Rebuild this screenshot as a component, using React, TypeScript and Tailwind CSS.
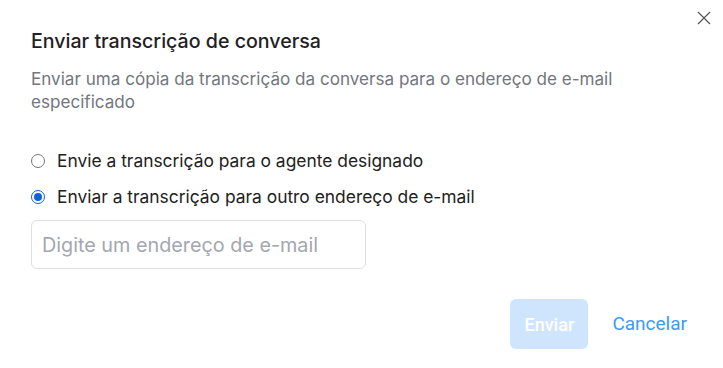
import { useState } from 'react'

export default function App() {
  const [mode, setMode] = useState<'agent' | 'other'>('other')
  const [email, setEmail] = useState('')

  return (
    <div className="relative w-[723px] h-[368px] bg-white font-['Inter',sans-serif] text-[#222]">
      {/* fechar */}
      <button className="absolute right-[12px] top-[11px] w-[14px] h-[14px] text-[#555]">
        <svg viewBox="0 0 14 14" width="14" height="14" fill="none" stroke="currentColor" strokeWidth="1.2">
          <path d="M1 1L13 13M13 1L1 13" />
        </svg>
      </button>

      <div className="pl-[31px] pr-[36px] pt-[29px]">
        <h2 className="text-[19.6px] leading-[24px] font-medium text-[#1f2125]">
          Enviar transcrição de conversa
        </h2>
        <p className="mt-[14px] w-[620px] text-[17.1px] leading-[23px] text-[#72767d]">
          Enviar uma cópia da transcrição da conversa para o endereço de e-mail especificado
        </p>

        <div className="mt-[36px] flex flex-col gap-[13px]">
          <label className="flex items-center gap-[12px] cursor-pointer" onClick={() => setMode('agent')}>
            <span
              className={`w-[14px] h-[14px] rounded-full border flex items-center justify-center ${
                mode === 'agent' ? 'border-[#0b63d6]' : 'border-[#767676]'
              }`}
            >
              {mode === 'agent' && <span className="w-[8px] h-[8px] rounded-full bg-[#0b63d6]" />}
            </span>
            <span className="text-[17.4px] leading-[23px] text-[#222]">
              Envie a transcrição para o agente designado
            </span>
          </label>
          <label className="flex items-center gap-[12px] cursor-pointer" onClick={() => setMode('other')}>
            <span
              className={`w-[14px] h-[14px] rounded-full border flex items-center justify-center ${
                mode === 'other' ? 'border-[#0b63d6]' : 'border-[#767676]'
              }`}
            >
              {mode === 'other' && <span className="w-[8px] h-[8px] rounded-full bg-[#0b63d6]" />}
            </span>
            <span className="text-[17.4px] leading-[23px] text-[#222]">
              Enviar a transcrição para outro endereço de e-mail
            </span>
          </label>
        </div>

        <input
          value={email}
          onChange={(e) => setEmail(e.target.value)}
          placeholder="Digite um endereço de e-mail"
          className="mt-[12px] w-[335px] h-[49px] px-[10px] rounded-[6px] border border-[#dcdfe4] text-[19.8px] placeholder:text-[#a2a7b0] outline-none"
        />

        <div className="mt-[30px] flex justify-end items-center gap-[24px]">
          <button
            disabled={!email}
            className="h-[50px] w-[78px] rounded-[6px] bg-[#cfe5fd] text-white text-[18px] font-medium font-['Roboto',sans-serif]"
          >
            Enviar
          </button>
          <button className="text-[19px] text-[#3b9bf5] font-['Roboto',sans-serif]">Cancelar</button>
        </div>
      </div>
    </div>
  )
}
